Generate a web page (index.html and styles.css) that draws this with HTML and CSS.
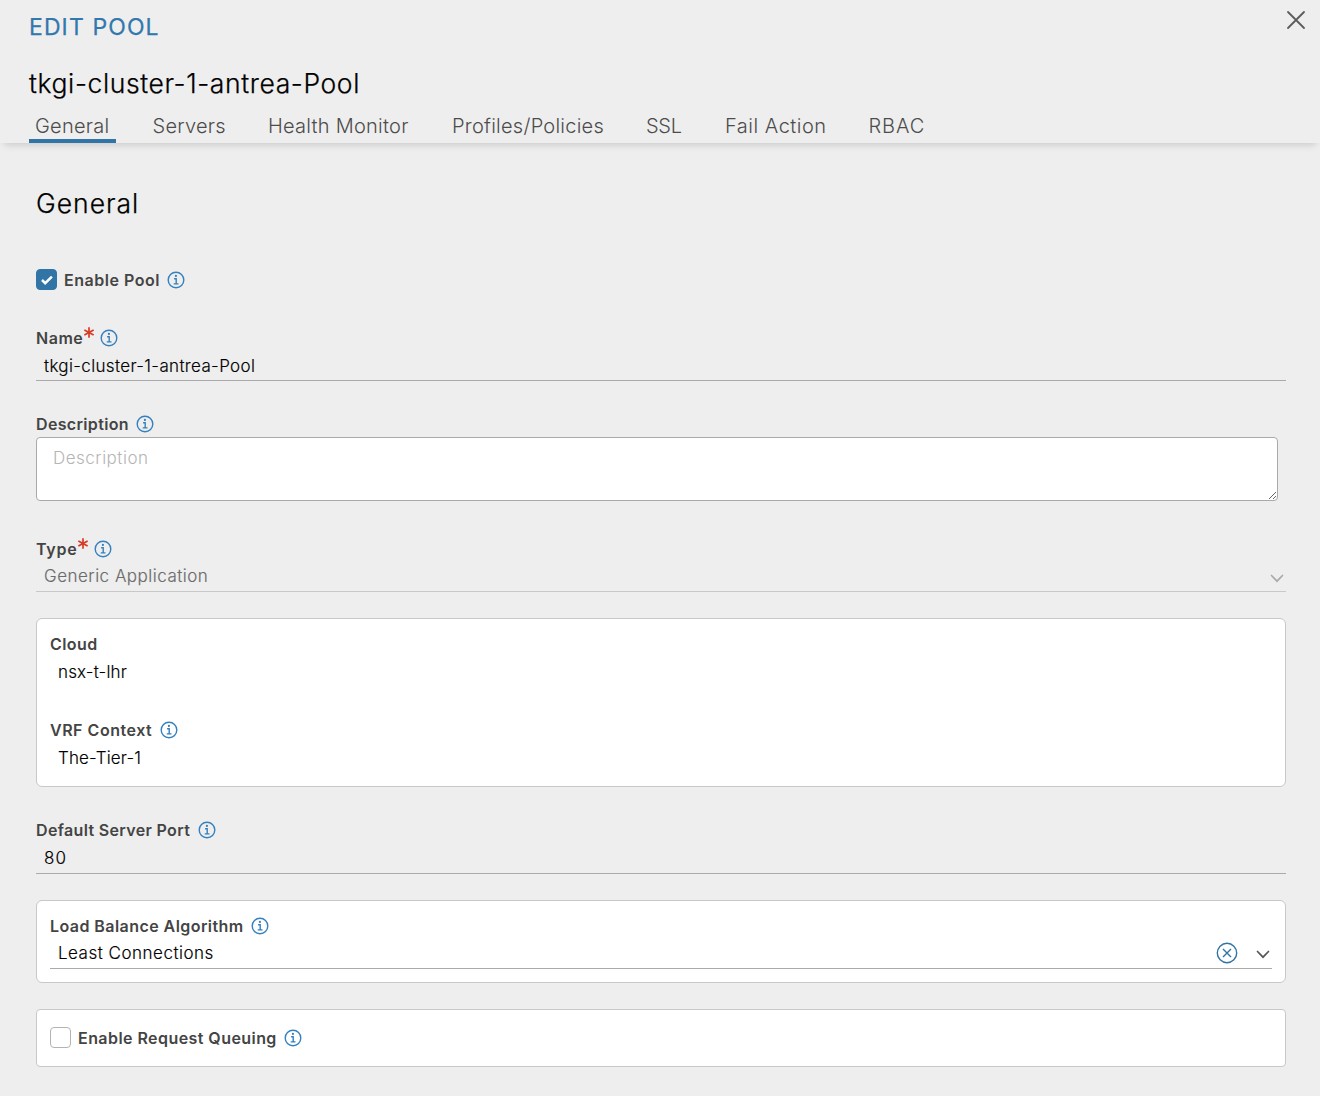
FILE: index.html
```
<!DOCTYPE html>
<html lang="en">
<head>
<meta charset="utf-8">
<title>Edit Pool</title>
<link rel="stylesheet" href="styles.css">
</head>
<body>
<svg class="defs" aria-hidden="true">
  <symbol id="info" viewBox="0 0 18 18">
    <circle cx="9" cy="9" r="7.8" fill="none" stroke="currentColor" stroke-width="1.4"/>
    <circle cx="8.9" cy="4.9" r="1.1" fill="currentColor"/>
    <path d="M7.1 7.7h2.1v5.1M6.7 12.9h4.8" fill="none" stroke="currentColor" stroke-width="1.4"/>
  </symbol>
  <symbol id="chevron" viewBox="0 0 14 9">
    <path d="M1.5 1.5 7 7.2l5.5-5.7" fill="none" stroke="currentColor" stroke-width="1.7" stroke-linecap="round"/>
  </symbol>
  <symbol id="star" viewBox="0 0 10 11">
    <path d="M5 .3v10.4M.4 2.9l9.2 5.200M9.6 2.900.4 8.100" fill="none" stroke="currentColor" stroke-width="1.7"/>
  </symbol>
</svg>
<header class="header">
  <div class="topbar">
    <div class="eyebrow">EDIT POOL</div>
    <svg class="close" viewBox="0 0 20 20"><path d="M2 2l16 16M18 2L2 18" fill="none" stroke="currentColor" stroke-width="1.8" stroke-linecap="round"/></svg>
  </div>
  <h1 class="title">tkgi-cluster-1-antrea-Pool</h1>
  <nav class="tabs">
    <span class="tab active">General</span>
    <span class="tab">Servers</span>
    <span class="tab">Health Monitor</span>
    <span class="tab">Profiles/Policies</span>
    <span class="tab tight">SSL</span>
    <span class="tab wide">Fail Action</span>
    <span class="tab wider">RBAC</span>
  </nav>
</header>
<main class="content">
  <h2 class="section">General</h2>
  <div class="check-row">
    <span class="box checked"><svg viewBox="0 0 12 10"><path d="M1 5l3.2 3.2L10.9 1.6" fill="none" stroke="#fff" stroke-width="2.5"/></svg></span>
    <span class="label loose">Enable Pool</span><svg class="info"><use href="#info"/></svg>
  </div>
  <section class="field name">
    <div class="label-row"><span class="label loose">Name</span><svg class="star"><use href="#star"/></svg><svg class="info"><use href="#info"/></svg></div>
    <div class="value line">tkgi-cluster-1-antrea-Pool</div>
  </section>
  <section class="field description">
    <div class="label-row"><span class="label snug">Description</span><svg class="info"><use href="#info"/></svg></div>
    <textarea class="area" placeholder="Description"></textarea>
  </section>
  <section class="field type">
    <div class="label-row"><span class="label wide">Type</span><svg class="star"><use href="#star"/></svg><svg class="info"><use href="#info"/></svg></div>
    <div class="value line select disabled"><span class="text">Generic Application</span><svg class="chevron"><use href="#chevron"/></svg></div>
  </section>
  <section class="card context">
    <div class="label-row"><span class="label">Cloud</span></div>
    <div class="value narrow">nsx-t-lhr</div>
    <div class="label-row second"><span class="label loose">VRF Context</span><svg class="info"><use href="#info"/></svg></div>
    <div class="value narrow">The-Tier-1</div>
  </section>
  <section class="field port">
    <div class="label-row"><span class="label snug">Default Server Port</span><svg class="info"><use href="#info"/></svg></div>
    <div class="value line number">80</div>
  </section>
  <section class="card algorithm">
    <div class="label-row"><span class="label">Load Balance Algorithm</span><svg class="info"><use href="#info"/></svg></div>
    <div class="value line select"><span class="text">Least Connections</span>
      <svg class="clear" viewBox="0 0 22 22"><circle cx="11" cy="11" r="9.7" fill="none" stroke="currentColor" stroke-width="1.4"/><path d="M7 7l8 8M15 7l-8 8" fill="none" stroke="currentColor" stroke-width="1.4"/></svg>
      <svg class="chevron"><use href="#chevron"/></svg></div>
  </section>
  <section class="card queuing">
    <div class="check-row">
      <span class="box"></span><span class="label">Enable Request Queuing</span><svg class="info"><use href="#info"/></svg>
    </div>
  </section>
</main>
</body>
</html>
```
FILE: styles.css
```
* { box-sizing: border-box; }
body { margin: 0; height: 1096px; overflow: hidden; background: #eee; color: #000; font-family: Inter, "Liberation Sans", sans-serif; }
svg { flex: none; }
.defs { display: none; }

.header { height: 143px; padding: 10px 14px 0 29px; box-shadow: 0 6px 7px -4px rgba(0, 0, 0, .15); }
.topbar { display: flex; justify-content: space-between; height: 34px; }
.eyebrow { font-size: 23px; font-weight: 400; line-height: 35px; letter-spacing: 1.1px; color: #3278ad; -webkit-text-stroke: .25px #3278ad; }
.close { width: 20px; height: 20px; color: #5c5c5c; }
.title { margin: 19px 0 0; font-size: 26.5px; font-weight: 300; line-height: 40px; letter-spacing: .61px; -webkit-text-stroke: .25px #000; }
.tabs { display: grid; grid-template-columns: 117.5px 115.5px 184px 194px 79px 143.5px 70px; height: 40px; padding-top: 7px; }
.tab { justify-self: start; height: 33px; padding: 0 6px; font-size: 20px; font-weight: 300; line-height: 32px; letter-spacing: .25px; color: #4c4c4c; white-space: nowrap; }
.tab.active { width: 87px; border-bottom: 4px solid #3075a5; }
.tab.tight { letter-spacing: -.3px; }
.tab.wide { letter-spacing: .5px; }
.tab.wider { letter-spacing: .9px; }

.content { padding: 40px 34px 0 36px; }
.section { margin: 0; font-size: 26.5px; font-weight: 300; line-height: 40px; letter-spacing: 1px; -webkit-text-stroke: .25px #000; }
.check-row { display: flex; align-items: center; height: 22px; }
.section + .check-row { margin-top: 45.5px; }
.box { display: flex; align-items: center; justify-content: center; width: 21px; height: 21px; margin-right: 7px; border: 1.5px solid #b3b3b3; border-radius: 4px; background: #fff; }
.box.checked { border-color: #3075a5; background: #3075a5; }
.box svg { width: 12px; height: 10px; }
.label { font-size: 16px; font-weight: 600; line-height: 20px; letter-spacing: .44px; color: #444; white-space: nowrap; }
.label.snug { letter-spacing: .34px; }
.label.loose { letter-spacing: .52px; }
.label.wide { letter-spacing: .75px; }
.label-row { display: flex; align-items: center; height: 20px; }
.info { width: 18px; height: 18px; margin-left: 7.5px; color: #3580be; }
.star { width: 10px; height: 11px; margin: 0 0 12px .5px; color: #d93a24; }
.star + .info { margin-left: 6px; }
.value { height: 32px; padding: 4px 0 0 8px; font-size: 17px; font-weight: 300; line-height: 28px; letter-spacing: .35px; -webkit-text-stroke: .15px currentColor; }
.narrow { letter-spacing: .15px; }
.line { border-bottom: 1px solid #aaa; }
.select { display: flex; padding-top: 3px; letter-spacing: .5px; }
.text { flex: 1; }
.number { letter-spacing: 1.2px; }
.disabled { color: #6b6b6b; border-color: #c8c8c8; }
.chevron { width: 14px; height: 9px; color: #565656; }
.disabled .chevron { margin: 12px 2px 0 0; color: #aaa; }

.name { margin-top: 37.5px; }
.name .value { height: 33px; }
.description { margin-top: 33px; }
.area { display: block; width: 1242px; height: 64px; margin-top: 3px; padding: 6px 16px; border: 1px solid #aaa; border-radius: 4px; background: #fff; font: 300 17px/28px Inter, sans-serif; letter-spacing: .5px; outline: 0; }
.area::placeholder { color: #b5b5b5; }
.type { margin-top: 38px; }
.type .value { height: 33px; }
.port { margin-top: 33px; }
.port .value { height: 34px; }

.card { margin-top: 26px; padding: 15px 13px 0; border: 1px solid #c8c8c8; border-radius: 6px; background: #fff; }
.context { height: 169px; }
.second { margin-top: 34px; }
.algorithm { height: 83px; padding-top: 14.5px; }
.algorithm .value { height: 33.5px; }
.clear { width: 22px; height: 22px; margin: 3px 18px 0 0; color: #3075a5; }
.algorithm .chevron { margin: 11px 2px 0 0; }
.queuing { height: 58px; padding-top: 16.5px; border-radius: 4px; }
```
